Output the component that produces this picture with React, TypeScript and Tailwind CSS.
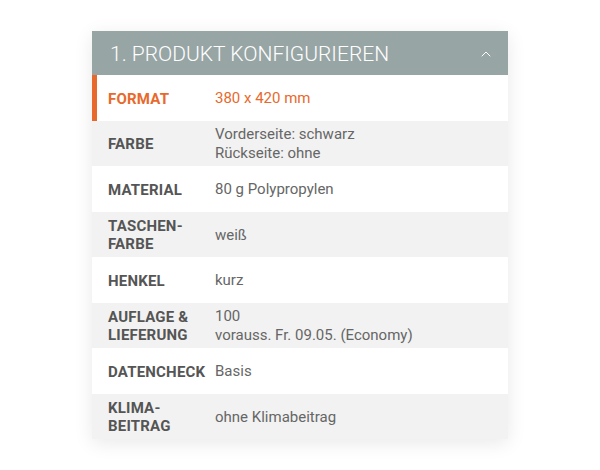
import { ChevronUp } from 'lucide-react';

type Row = { label: string[]; value: string[]; active?: boolean };

const rows: Row[] = [
	{ label: ['FORMAT'], value: ['380 x 420 mm'], active: true },
	{ label: ['FARBE'], value: ['Vorderseite: schwarz', 'Rückseite: ohne'] },
	{ label: ['MATERIAL'], value: ['80 g Polypropylen'] },
	{ label: ['TASCHEN-', 'FARBE'], value: ['weiß'] },
	{ label: ['HENKEL'], value: ['kurz'] },
	{ label: ['AUFLAGE &', 'LIEFERUNG'], value: ['100', 'vorauss. Fr. 09.05. (Economy)'] },
	{ label: ['DATENCHECK'], value: ['Basis'] },
	{ label: ['KLIMA-', 'BEITRAG'], value: ['ohne Klimabeitrag'] },
];

const App = () => {
	return (
		<main
			className="min-h-screen w-full bg-white pt-[31px] pl-[92px]"
			style={{ fontFamily: 'Roboto, "Liberation Sans", sans-serif' }}
		>
			<section className="w-[416px] shadow-[0_4px_18px_rgba(0,0,0,0.09)]">
				<header className="h-[44px] bg-[#98a5a5] flex items-center justify-between pl-[18px] pr-[14px] pt-[3px]">
					<h1 className="text-[21px] font-light text-white">1. PRODUKT KONFIGURIEREN</h1>
					<ChevronUp className="w-4 h-4 text-white -mt-[2px]" strokeWidth={1.5} />
				</header>
				{rows.map((row, i) => (
					<div
						key={i}
						className={
							'h-[45.5px] flex items-center pt-[2px] text-[15px] ' +
							(i % 2 === 0 ? 'bg-white ' : 'bg-[#f2f2f2] ') +
							(row.active ? 'border-l-[5px] border-[#e8692c] pl-[11px] text-[#e8692c]' : 'pl-4')
						}
					>
						<div className={'w-[107px] font-bold leading-[18px] tracking-[0.2px] ' + (row.active ? '' : 'text-[#555555]')}>
							{row.label.map((l) => (
								<div key={l}>{l}</div>
							))}
						</div>
						<div className={'leading-[19px] ' + (row.active ? '' : 'text-[#666666]')}>
							{row.value.map((v) => (
								<div key={v}>{v}</div>
							))}
						</div>
					</div>
				))}
			</section>
		</main>
	);
};

export default App;
